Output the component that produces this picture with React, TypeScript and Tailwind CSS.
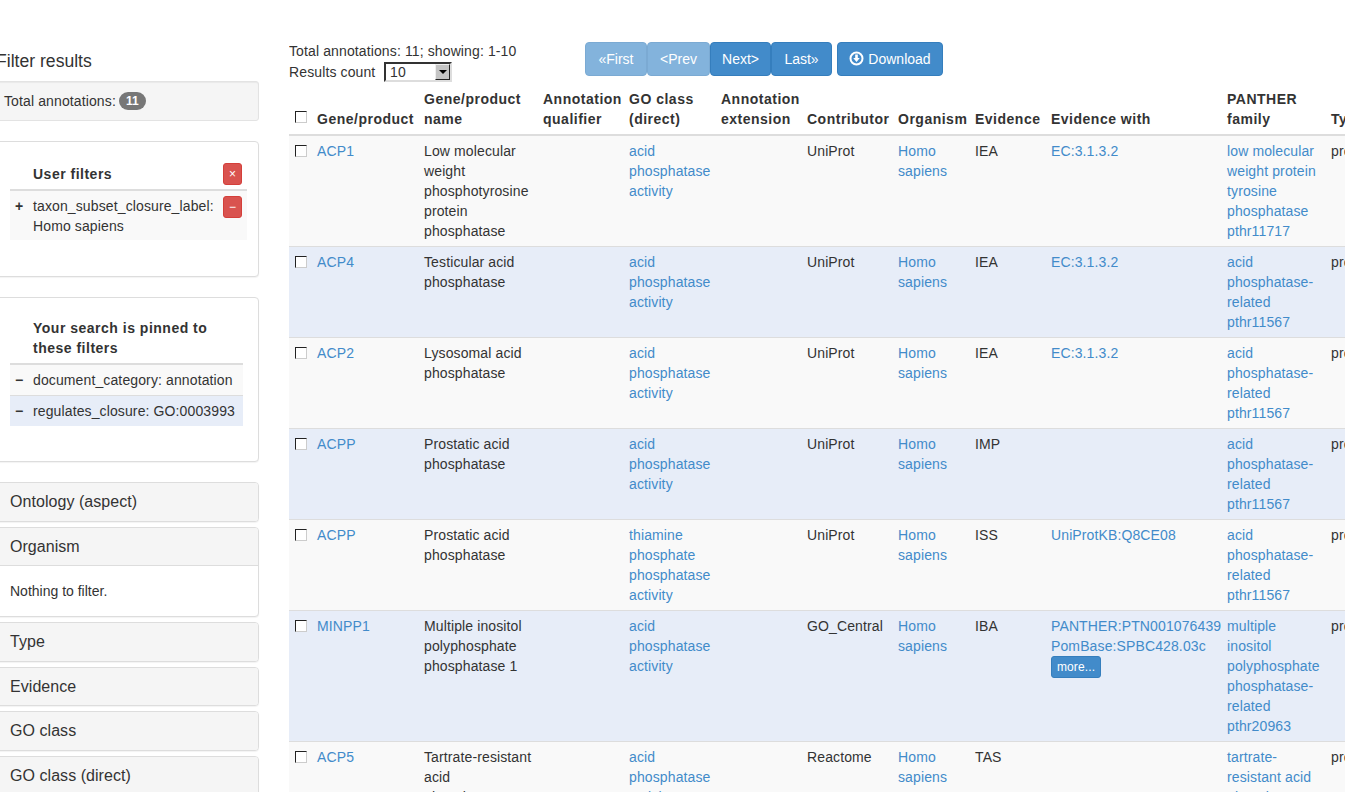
import React from "react";

const link = "text-[#428bca]";

type Row = {
  gene: string;
  name: string;
  go: string;
  contrib: string;
  ev: string;
  withs?: string[];
  more?: boolean;
  panther: string[];
};

const rows: Row[] = [
  { gene: "ACP1", name: "Low molecular weight phosphotyrosine protein phosphatase", go: "acid phosphatase activity", contrib: "UniProt", ev: "IEA", withs: ["EC:3.1.3.2"], panther: ["low molecular weight protein tyrosine phosphatase", "pthr11717"] },
  { gene: "ACP4", name: "Testicular acid phosphatase", go: "acid phosphatase activity", contrib: "UniProt", ev: "IEA", withs: ["EC:3.1.3.2"], panther: ["acid phosphatase-related", "pthr11567"] },
  { gene: "ACP2", name: "Lysosomal acid phosphatase", go: "acid phosphatase activity", contrib: "UniProt", ev: "IEA", withs: ["EC:3.1.3.2"], panther: ["acid phosphatase-related", "pthr11567"] },
  { gene: "ACPP", name: "Prostatic acid phosphatase", go: "acid phosphatase activity", contrib: "UniProt", ev: "IMP", panther: ["acid phosphatase-related", "pthr11567"] },
  { gene: "ACPP", name: "Prostatic acid phosphatase", go: "thiamine phosphate phosphatase activity", contrib: "UniProt", ev: "ISS", withs: ["UniProtKB:Q8CE08"], panther: ["acid phosphatase-related", "pthr11567"] },
  { gene: "MINPP1", name: "Multiple inositol polyphosphate phosphatase 1", go: "acid phosphatase activity", contrib: "GO_Central", ev: "IBA", withs: ["PANTHER:PTN001076439", "PomBase:SPBC428.03c"], more: true, panther: ["multiple inositol polyphosphate phosphatase-related", "pthr20963"] },
  { gene: "ACP5", name: "Tartrate-resistant acid phosphatase type 5", go: "acid phosphatase activity", contrib: "Reactome", ev: "TAS", panther: ["tartrate-resistant acid phosphatase", "pthr10161"] },
];

const widths = [23, 107, 119, 86, 92, 86, 91, 77, 76, 176, 104, 90];

function Check({ head }: { head?: boolean }) {
  return <span className={`block w-[12px] h-[12px] border border-[#222] border-r-[#ccc] border-b-[#ccc] bg-white ml-[1px] ${head ? "mb-[6px]" : "mt-[4px]"}`} />;
}

function Panel({ title, children }: { title: string; children?: React.ReactNode }) {
  return (
    <div className="shrink-0 border border-[#ddd] rounded-[4px] bg-white shadow-[0_1px_1px_rgba(0,0,0,0.05)]">
      <div className={`bg-[#f5f5f5] px-[15px] py-[10px] text-[16px] leading-[17.6px] tracking-[0.05px] text-[#333] rounded-t-[3px] ${children ? "border-b border-[#ddd]" : "rounded-b-[3px]"}`}>{title}</div>
      {children}
    </div>
  );
}

const btn = "h-[34px] leading-[32px] bg-[#428bca] border border-[#357ebd] rounded-[4px] text-white text-center tracking-normal";

export default function App() {
  const th = "align-bottom text-left font-bold tracking-[0.5px] px-[5px] pt-[5px] pb-[5px] border-b-2 border-[#ddd] text-[#333]";
  const td = "align-top px-[5px] pt-[5px] pb-[5px] border-t border-[#ddd]";
  return (
    <div className="w-[1345px] h-[792px] overflow-hidden bg-white text-[14px] leading-[20px] tracking-[0.12px] text-[#333] font-['Liberation_Sans',Arial,sans-serif] flex">
      <aside className="w-[265px] shrink-0 -ml-[6px] pt-[51px] flex flex-col">
        <h4 className="shrink-0 text-[17.6px] leading-[20px] font-normal tracking-normal ml-[2px] mb-[10px] text-[#333]">Filter results</h4>
        <div className="shrink-0 h-[40px] border border-[#e3e3e3] rounded-[3px] bg-[#f5f5f5] px-[9px] py-[9px] shadow-[inset_0_1px_1px_rgba(0,0,0,0.05)] flex items-center gap-[3px]">
          <span>Total annotations:</span>
          <span className="inline-block bg-[#777] text-white text-[12px] font-bold leading-[12px] px-[7px] py-[3px] rounded-[10px]">11</span>
        </div>

        <div className="shrink-0 mt-[20px] h-[136px] border border-[#ddd] rounded-[4px] bg-white pl-[15px] pr-[11px] pt-[20px] shadow-[0_1px_1px_rgba(0,0,0,0.05)]">
          <div className="flex items-start border-b-[2px] border-[#ddd] h-[29px]">
            <span className="w-[23px]" />
            <span className="font-bold tracking-[0.5px] flex-1 pt-[2px]">User filters</span>
            <span className="w-[19px] h-[22px] mr-[5px] mt-[1px] bg-[#d9534f] border border-[#d43f3a] rounded-[3px] text-white text-[12px] leading-[20px] text-center">×</span>
          </div>
          <div className="flex items-start bg-[#f9f9f9] h-[49px] pt-[5px]">
            <span className="w-[23px] pl-[5px] font-bold">+</span>
            <span className="flex-1">taxon_subset_closure_label: Homo sapiens</span>
            <span className="w-[19px] h-[22px] mr-[5px] ml-[5px] bg-[#d9534f] border border-[#d43f3a] rounded-[3px] text-white text-[12px] leading-[20px] text-center">−</span>
          </div>
        </div>

        <div className="shrink-0 mt-[20px] h-[165px] border border-[#ddd] rounded-[4px] bg-white px-[15px] pt-[20px] shadow-[0_1px_1px_rgba(0,0,0,0.05)]">
          <div className="border-b-[2px] border-[#ddd] pl-[23px] pr-[5px] pb-[5px] font-bold tracking-[0.5px]">Your search is pinned to these filters</div>
          <div className="flex bg-[#f9f9f9] h-[31px] pt-[5px] border-b border-[#ddd] whitespace-nowrap">
            <span className="w-[23px] pl-[5px] font-bold">−</span>
            <span>document_category: annotation</span>
          </div>
          <div className="flex bg-[#e7edf8] h-[30px] pt-[5px] whitespace-nowrap">
            <span className="w-[23px] pl-[5px] font-bold">−</span>
            <span>regulates_closure: GO:0003993</span>
          </div>
        </div>

        <div className="mt-[20px] flex flex-col gap-[5px] shrink-0">
          <Panel title="Ontology (aspect)" />
          <Panel title="Organism">
            <div className="px-[15px] py-[15px] h-[50px] tracking-normal">Nothing to filter.</div>
          </Panel>
          <Panel title="Type" />
          <Panel title="Evidence" />
          <Panel title="GO class" />
          <Panel title="GO class (direct)" />
        </div>
      </aside>

      <main className="ml-[30px] flex-1 min-w-0 overflow-hidden pt-[41px]">
        <div className="flex h-[43px]">
          <div className="w-[296px] shrink-0">
            <div>Total annotations: 11; showing: 1-10</div>
            <div className="flex items-center mt-[1px]">
              <span className="w-[95px]">Results count</span>
              <span className="w-[68px] h-[20px] border-2 border-t-[#333] border-l-[#333] border-r-[#ddd] border-b-[#ddd] bg-white flex items-center justify-between leading-[16px] pl-[4px]">
                <span>10</span>
                <span className="w-[15px] h-[16px] bg-[#c4c4c4] border border-t-[#eee] border-l-[#eee] border-r-[#222] border-b-[#222] flex items-center justify-center">
                  <span className="w-0 h-0 border-x-[4px] border-x-transparent border-t-[4px] border-t-black" />
                </span>
              </span>
            </div>
          </div>
          <div className="flex h-[34px] mt-[1px]">
            <span className={`${btn} w-[62px] opacity-65`}>«First</span>
            <span className={`${btn} w-[63px] opacity-65`}>&lt;Prev</span>
            <span className={`${btn} w-[61px]`}>Next&gt;</span>
            <span className={`${btn} w-[61px]`}>Last»</span>
            <span className={`${btn} w-[106px] ml-[5px] flex items-center justify-center gap-[4px]`}>
              <svg width="15" height="15" viewBox="0 0 15 15" className="-mt-[2px]">
                <circle cx="7.5" cy="7.5" r="6" fill="none" stroke="white" strokeWidth="2" />
                <path d="M6.2 3.5h2.6v3.6h2L7.5 11 4.2 7.1h2z" fill="white" />
              </svg>
              Download
            </span>
          </div>
        </div>

        <table className="table-fixed border-collapse w-[1127px]">
          <colgroup>
            {widths.map((w, i) => (
              <col key={i} style={{ width: w }} />
            ))}
          </colgroup>
          <thead>
            <tr>
              <th className={th}><Check head /></th>
              <th className={th}>Gene/product</th>
              <th className={th}>Gene/product name</th>
              <th className={th}>Annotation qualifier</th>
              <th className={th}>GO class (direct)</th>
              <th className={th}>Annotation extension</th>
              <th className={th}>Contributor</th>
              <th className={th}>Organism</th>
              <th className={th}>Evidence</th>
              <th className={th}>Evidence with</th>
              <th className={th}>PANTHER family</th>
              <th className={th}>Type</th>
            </tr>
          </thead>
          <tbody>
            {rows.map((r, i) => (
              <tr key={i} className={i % 2 === 0 ? "bg-[#f9f9f9]" : "bg-[#e7edf8]"}>
                <td className={td}><Check /></td>
                <td className={td}><span className={link}>{r.gene}</span></td>
                <td className={td}>{r.name}</td>
                <td className={td} />
                <td className={td}><span className={link}>{r.go}</span></td>
                <td className={td} />
                <td className={td}>{r.contrib}</td>
                <td className={td}><span className={link}>Homo sapiens</span></td>
                <td className={td}>{r.ev}</td>
                <td className={td}>
                  {r.withs?.map((w) => (
                    <div key={w} className={link}>{w}</div>
                  ))}
                  {r.more && (
                    <span className="block w-[50px] h-[22px] bg-[#428bca] border border-[#357ebd] rounded-[3px] text-white text-[12px] leading-[20px] text-center">more...</span>
                  )}
                </td>
                <td className={td}>
                  {r.panther.map((p) => (
                    <div key={p} className={link}>{p}</div>
                  ))}
                </td>
                <td className={td}>protein</td>
              </tr>
            ))}
          </tbody>
        </table>
      </main>
    </div>
  );
}
